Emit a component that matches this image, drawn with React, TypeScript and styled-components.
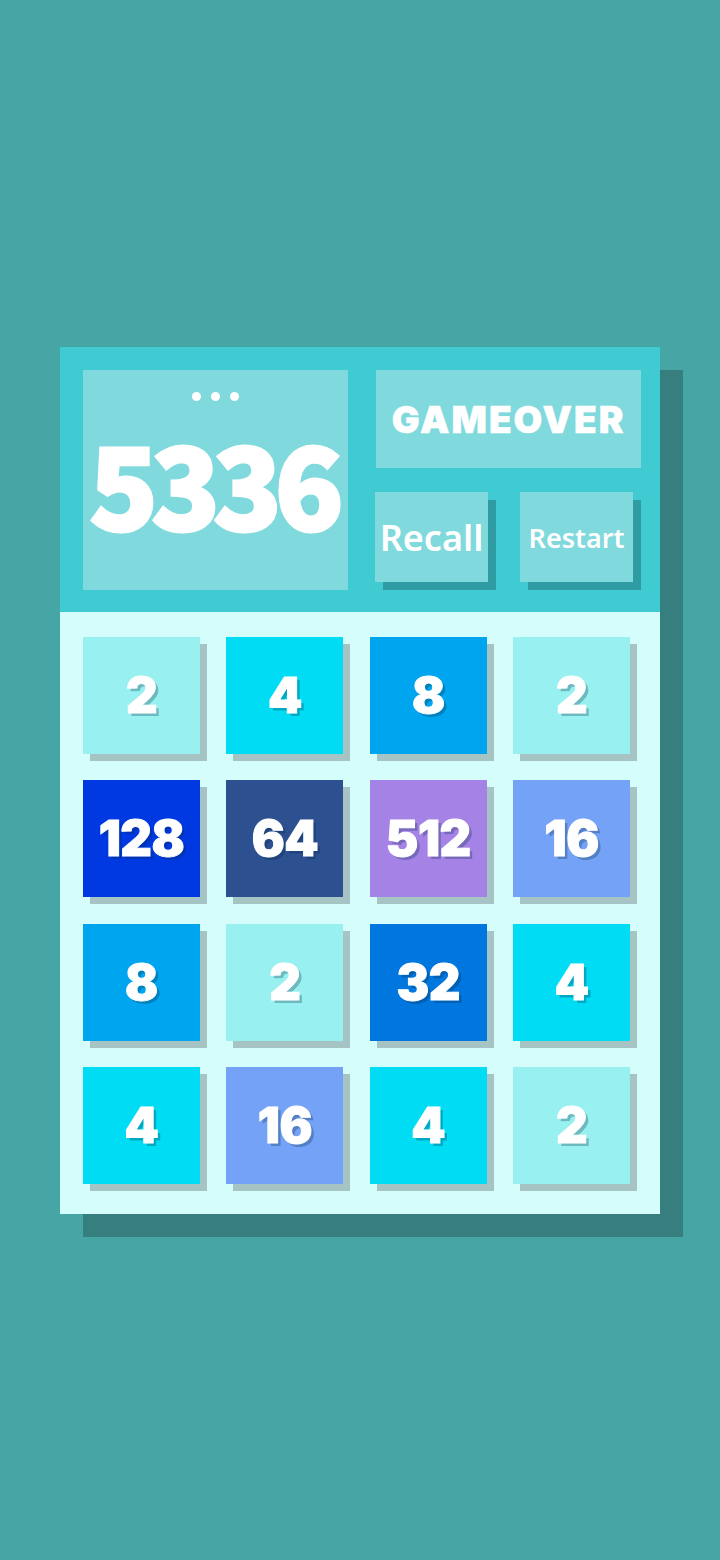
import React from "react";
import styled, { createGlobalStyle } from "styled-components";

const GlobalStyle = createGlobalStyle`
  html, body {
    margin: 0;
    padding: 0;
    background: #46a6a6;
  }
  body {
    font-family: "Noto Sans", sans-serif;
  }
`;

const ROUND_HEAVY = `"Inter", "Noto Sans CJK SC", sans-serif`;
const NARROW_HEAVY = `"Noto Sans CJK SC", "Inter", sans-serif`;

const Page = styled.div`
  width: 720px;
  min-height: 1560px;
  box-sizing: border-box;
  padding: 347px 0 0 60px;
`;

const Panel = styled.div`
  width: 600px;
  box-shadow: 23px 23px 0 #377e7e;
`;

const Header = styled.div`
  height: 265px;
  box-sizing: border-box;
  background: #40cad1;
  padding: 23px 19px 22px 23px;
  display: grid;
  grid-template-columns: 265px 265px;
  column-gap: 28px;
`;

const ScoreBox = styled.div`
  background: #80d9dc;
  display: flex;
  flex-direction: column;
  align-items: center;
  padding-top: 22px;
  box-sizing: border-box;
  overflow: hidden;
`;

const Dots = styled.div`
  display: flex;
  gap: 10px;
`;

const Dot = styled.span`
  width: 9px;
  height: 9px;
  border-radius: 50%;
  background: #ffffff;
`;

const Score = styled.div`
  font-family: ${NARROW_HEAVY};
  font-weight: 900;
  font-size: 113px;
  line-height: 1;
  letter-spacing: -7px;
  color: #ffffff;
  -webkit-text-stroke: 3px #ffffff;
  margin-top: 24px;
  margin-left: -5px;
`;

const Side = styled.div`
  display: flex;
  flex-direction: column;
  gap: 24px;
`;

const Status = styled.div`
  height: 98px;
  background: #80d9dc;
  display: flex;
  align-items: center;
  justify-content: center;
  font-family: ${ROUND_HEAVY};
  font-weight: 900;
  font-size: 37px;
  letter-spacing: 2px;
  color: #ffffff;
  -webkit-text-stroke: 0.5px #ffffff;
`;

const Buttons = styled.div`
  display: grid;
  grid-template-columns: 113px 113px;
  column-gap: 32px;
  margin-left: -1px;
`;

const Button = styled.button<{ $size: number }>`
  height: 90px;
  border: none;
  padding: 0;
  background: #80d9dc;
  box-shadow: 8px 8px 0 #2f9ba2;
  color: #ffffff;
  font-family: "Noto Sans", "Open Sans", sans-serif;
  font-weight: 600;
  font-size: ${(p) => p.$size}px;
  display: flex;
  align-items: center;
  justify-content: center;
  white-space: nowrap;
`;

const Board = styled.div`
  background: #d4fdfc;
  padding: 25px 30px 30px 23px;
  display: grid;
  grid-template-columns: repeat(4, 117px);
  grid-auto-rows: 117px;
  column-gap: 26.4px;
  row-gap: 26.4px;
`;

const TILE_COLORS: Record<number, string> = {
  2: "#98f1f0",
  4: "#00dcf3",
  8: "#00a5ef",
  16: "#74a2f7",
  32: "#0077df",
  64: "#2c5090",
  128: "#0039e2",
  512: "#a583e6",
};

const Tile = styled.div<{ $bg: string }>`
  background: ${(p) => p.$bg};
  box-shadow: 7px 7px 0 #a6c4c4;
  display: flex;
  align-items: center;
  justify-content: center;
  font-family: ${ROUND_HEAVY};
  font-weight: 900;
  font-size: 49px;
  line-height: 1;
  letter-spacing: -0.5px;
  color: #ffffff;
  -webkit-text-stroke: 1px #ffffff;
  text-shadow: 3px 3px 0 rgba(0, 40, 70, 0.28);
`;

const cells = [2, 4, 8, 2, 128, 64, 512, 16, 8, 2, 32, 4, 4, 16, 4, 2];

export default function App() {
  return (
    <>
      <GlobalStyle />
      <Page>
        <Panel>
          <Header>
            <ScoreBox>
              <Dots>
                <Dot />
                <Dot />
                <Dot />
              </Dots>
              <Score>5336</Score>
            </ScoreBox>
            <Side>
              <Status>GAMEOVER</Status>
              <Buttons>
                <Button $size={36}>Recall</Button>
                <Button $size={27}>Restart</Button>
              </Buttons>
            </Side>
          </Header>
          <Board>
            {cells.map((v, i) => (
              <Tile key={i} $bg={TILE_COLORS[v]}>
                {v}
              </Tile>
            ))}
          </Board>
        </Panel>
      </Page>
    </>
  );
}
